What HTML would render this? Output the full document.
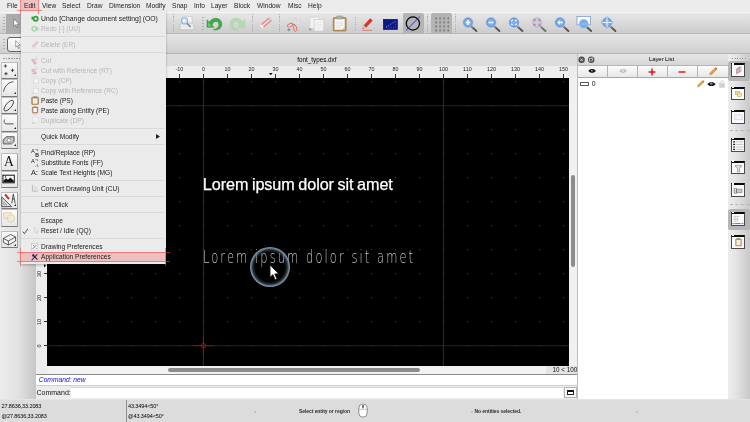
<!DOCTYPE html><html><head><meta charset="utf-8"><title>QCAD</title><style>
*{box-sizing:border-box;margin:0;padding:0}
html,body{width:750px;height:422px;overflow:hidden;background:#ececec;font-family:"Liberation Sans",sans-serif;font-size:7px;color:#1c1c1c}
div,span,svg,i,b{position:absolute;display:block}
.t{white-space:nowrap;line-height:1}
#menubar{left:0;top:0;width:750px;height:12px;background:#ebebeb}
#menubar span{top:2.2px;font-size:7.2px;color:#222;transform:scaleX(0.92);transform-origin:0 0}
#tb1{left:0;top:12px;width:750px;height:22.4px;background:linear-gradient(#e7e7e7,#cccccc);border-top:0.6px solid #f6f6f6;border-bottom:0.8px solid #b9b9b9}
#tb2{left:0;top:34.4px;width:750px;height:19.4px;background:linear-gradient(#e5e5e5,#cfcfcf);border-bottom:0.8px solid #b4b4b4}
.vsep{width:1px;top:1.2px;height:20px;background:repeating-linear-gradient(#b0b0b0 0,#b0b0b0 1.1px,transparent 1.1px,transparent 2.4px)}
.hnd{width:2.1px;top:4px;height:13.4px;background:repeating-linear-gradient(#b0b0b0 0,#b0b0b0 1px,transparent 1px,transparent 3.07px)}
.sel{background:#b4b4b4;border-radius:2px}
#mid{left:0;top:54px;width:750px;height:345px;background:#ececec}
#ltool{left:0;top:54px;width:36px;height:345px;background:linear-gradient(90deg,#ececec,#e2e2e2 50%,#c6c6c6)}
.lb{left:0.6px;width:17.2px;height:17.4px;border:0.9px solid #a0a0a0;border-left-color:#c4c4c4;border-top-color:#bdbdbd;border-bottom-color:#7a7a7a;background:linear-gradient(#fbfbfb,#e6e6e6);border-radius:1px}
#tabbar{left:36px;top:54px;width:541px;height:11.5px;background:#dddddd}
#hruler{left:36px;top:65.5px;width:541px;height:12px;background:#ededed}
#vruler{left:36px;top:77px;width:11px;height:297px;background:#ededed}
.rl{font-size:5.4px;color:#222;top:1.9px;width:20px;text-align:center;line-height:1;white-space:nowrap}
.rt{width:1px;height:4.2px;top:8.2px;background:#333}
.vl{font-size:5.4px;color:#222;width:20px;height:6px;text-align:center;line-height:1;transform:rotate(-90deg);transform-origin:center;white-space:nowrap}
.vt{height:1px;width:3.5px;left:7.5px;background:#333}
#canvas{left:47px;top:77.5px;width:522px;height:288.2px;background:#000;overflow:hidden}
#vscroll{left:569px;top:77px;width:8px;height:289px;background:#f1f1f1}
#hscroll{left:47px;top:366px;width:530px;height:8px;background:#f1f1f1}
#hist{left:36px;top:374px;width:541px;height:11.5px;background:#fff;border-top:1px solid #8a8a8a;border-bottom:1px solid #cfcfcf}
#cmd{left:36px;top:387px;width:541px;height:12px}
#status{left:0;top:399px;width:750px;height:23px;background:#dcdcdc;border-top:1px solid #e4e4e4}
#status .s{font-size:5.5px;color:#000;white-space:nowrap;line-height:1;letter-spacing:-0.1px}
#layers{left:577px;top:54px;width:151px;height:345px;background:#fff;border-left:1px solid #bdbdbd}
#rtool{left:727.6px;top:54px;width:22.4px;height:345px;background:linear-gradient(90deg,#ededed,#e6e6e6 30%,#c9c9c9)}
.wi{left:3.3px;width:14px;height:13.8px;background:#fcfcfc;border:0.7px solid #4a4a4a;border-top:2.6px solid #0a0a0a}
.wi:before{content:'';position:absolute;left:0.3px;top:-2.2px;width:1.6px;height:1.6px;background:#fff}
#menu{left:21px;top:11px;width:144.8px;height:252.8px;background:#ebebeb;box-shadow:0 0.5px 2.5px rgba(0,0,0,.28)}
#menu .mi{left:19.6px;font-size:7.1px;color:#1a1a1a;white-space:nowrap;line-height:1;transform:scaleX(0.93);transform-origin:0 0}
#menu .dis{color:#b6b6b6}
#menu .sep{left:0;width:144px;height:1.4px;background:#dadada}
.hl{background:rgba(250,100,100,0.33)}
.rl1{background:rgba(240,64,64,0.55)}
</style></head><body><div id="root" style="left:0;top:0;width:750px;height:422px;will-change:transform">
<div id="menubar">
<div class="hl" style="left:20.6px;top:0;width:17.6px;height:10.3px"></div>
<span class="t" style="left:7px">File</span>
<span class="t" style="left:24px">Edit</span>
<span class="t" style="left:42px">View</span>
<span class="t" style="left:62px">Select</span>
<span class="t" style="left:87px">Draw</span>
<span class="t" style="left:108.5px">Dimension</span>
<span class="t" style="left:146px">Modify</span>
<span class="t" style="left:172px">Snap</span>
<span class="t" style="left:194px">Info</span>
<span class="t" style="left:211px">Layer</span>
<span class="t" style="left:234px">Block</span>
<span class="t" style="left:257px">Window</span>
<span class="t" style="left:287.5px">Misc</span>
<span class="t" style="left:307.5px">Help</span>
</div>
<div id="tb1">
<div class="hnd" style="left:3px"></div>
<div class="sel" style="left:6px;top:0.5px;width:20px;height:21px;border-radius:0;background:#ababab"></div>
<svg style="left:12.8px;top:5.2px" width="7.3" height="11" viewBox="0 0 10 15"><path d="M1 1 L1 11.5 L3.6 9.2 L5.6 13.6 L7.2 12.9 L5.3 8.6 L8.8 8.4 Z" fill="#fff" stroke="#6a6a6a" stroke-width="1"/></svg>
<div class="vsep" style="left:172.5px"></div>
<svg style="left:179px;top:3px" width="17" height="15" viewBox="0 0 17 15"><rect x="3.2" y="0.6" width="9.8" height="7" fill="#f3f3f3" stroke="#c4c4c4" stroke-width="0.5"/><path d="M2.2 6.8 H13.6 L15 9 V13 Q15 13.8 14.2 13.8 H1.6 Q0.8 13.8 0.8 13 V9 Z" fill="#dedede" stroke="#b4b4b4" stroke-width="0.5"/><rect x="1.6" y="10.6" width="12.6" height="2.2" fill="#efefef"/><path d="M1.4 9.2 H14.4" stroke="#f6f6f6" stroke-width="0.8"/><path d="M8 7.4 L11.2 10.6" stroke="#8a8a8a" stroke-width="1.5" stroke-linecap="round"/><circle cx="5.5" cy="4.8" r="3.1" fill="#cfe1f7" stroke="#8fb4e6" stroke-width="1.1"/><circle cx="5.3" cy="4.2" r="1.3" fill="#f2f7fd"/></svg>
<div class="hnd" style="left:201.5px"></div>
<svg style="left:206px;top:3.5px" width="17" height="15" viewBox="0 0 17 15"><path d="M1 2.9 L1 10.3 L8 10.3 L6 7.9 C7 5.4 9 4.2 10.6 4.6 C12.4 5 13.2 6.6 12.8 8.4 C12.3 10.6 10.2 12.2 7.3 12.6 C10.6 13.8 14.8 12.2 15.7 8.4 C16.5 4.8 14 1.6 10.4 1.3 C7.6 1.1 5 2.6 3.4 5 Z" fill="#41aa48" stroke="#2b9236" stroke-width="0.5" stroke-linejoin="round"/><path d="M2 5 L2 9.4 L6 9.4 Z" fill="#7fd07f" opacity="0.7"/></svg>
<svg style="left:229.3px;top:3.5px" width="17" height="15" viewBox="0 0 17 15"><path transform="translate(16.7,0) scale(-1,1)" d="M1 2.9 L1 10.3 L8 10.3 L6 7.9 C7 5.4 9 4.2 10.6 4.6 C12.4 5 13.2 6.6 12.8 8.4 C12.3 10.6 10.2 12.2 7.3 12.6 C10.6 13.8 14.8 12.2 15.7 8.4 C16.5 4.8 14 1.6 10.4 1.3 C7.6 1.1 5 2.6 3.4 5 Z" fill="#b1dcb3" stroke="#9fd2a3" stroke-width="0.5" stroke-linejoin="round"/></svg>
<div class="vsep" style="left:251.5px"></div>
<svg style="left:257px;top:3px" width="18" height="17" viewBox="0 0 18 17"><path d="M4 13.4 H15" stroke="#dadada" stroke-width="0.7"/><g transform="rotate(-40 8.6 7.2)"><rect x="2.2" y="4.9" width="12.8" height="4.6" rx="0.8" fill="#e98c8c"/><rect x="2.2" y="6.5" width="12.8" height="1.4" fill="#f7eaea"/><rect x="2.2" y="4.9" width="2.4" height="4.6" rx="0.6" fill="#f4f0f0"/><rect x="14" y="4.9" width="1" height="4.6" fill="#bdbdbd"/></g></svg>
<div class="vsep" style="left:279px"></div>
<svg style="left:285.5px;top:3.5px" width="16" height="16" viewBox="0 0 16 16"><path d="M9.3 0.4 C8.6 3 8.2 5 8.4 7.6 L10 7.4 C10.4 5 10.2 2.6 9.3 0.4Z M14.6 3.2 C12.4 3.8 10.4 5 8.4 7.2 L9.6 8.2 C11.6 7 13.4 5.4 14.6 3.2Z" fill="#f2f2f2" stroke="#c2c2c2" stroke-width="0.5"/><ellipse cx="4" cy="8.2" rx="2.9" ry="1.5" fill="none" stroke="#e56e6e" stroke-width="0.9" transform="rotate(-25 4 8.2)"/><ellipse cx="9.2" cy="11.4" rx="1.6" ry="3.1" fill="none" stroke="#e56e6e" stroke-width="0.9" transform="rotate(-14 9.2 11.4)"/><path d="M6.4 7.6 L8.8 7.6 M8.8 7.6 L9 9" stroke="#e56e6e" stroke-width="1"/><path d="M1.4 12.8 H4.4 M2.9 11.3 V14.3" stroke="#6a6a6a" stroke-width="0.7"/></svg>
<svg style="left:308px;top:2.8px" width="18" height="17" viewBox="0 0 18 17"><rect x="1.8" y="1" width="9.6" height="11.4" fill="#f0f0f0" stroke="#d2d2d2" stroke-width="0.7"/><rect x="6.2" y="3.4" width="9.6" height="11.6" fill="#f5f5f5" stroke="#cdcdcd" stroke-width="0.7"/><path d="M7.8 6.4 H14.2 M7.8 8.4 H14.2 M7.8 10.4 H14.2 M7.8 12.4 H12.4" stroke="#e0e0e0" stroke-width="0.6"/><path d="M0.6 13.4 H3.6 M2.1 11.9 V14.9" stroke="#8e8e8e" stroke-width="0.7"/></svg>
<svg style="left:331.8px;top:2px" width="16" height="17" viewBox="0 0 16 17"><rect x="1.2" y="2.6" width="13" height="13.4" rx="1" fill="#c2934f" stroke="#96703a" stroke-width="0.6"/><rect x="2.6" y="4" width="10.2" height="10.8" fill="#f8f8f8" stroke="#d0c4b0" stroke-width="0.3"/><rect x="4.6" y="1" width="6.2" height="3" rx="0.9" fill="#aeb2ae" stroke="#838783" stroke-width="0.5"/><path d="M4.2 7 H11.2 M4.2 8.8 H11.2 M4.2 10.6 H11.2 M4.2 12.4 H9" stroke="#d4d4d4" stroke-width="0.6"/><path d="M9.8 14.8 L12.8 14.8 L12.8 11.8 Z" fill="#b4b8bc"/></svg>
<div class="vsep" style="left:354.5px;top:4px;height:14px"></div>
<svg style="left:360.5px;top:3.5px" width="13" height="16" viewBox="0 0 13 16"><path d="M9.2 1.6 L11.4 3.6 L5 10.6 L2.8 8.6 Z" fill="#e23328" stroke="#b3231b" stroke-width="0.4"/><path d="M2.8 8.6 L5 10.6 L1.6 11.8 Z" fill="#ecd0a8" stroke="#a8875e" stroke-width="0.3"/><path d="M1.6 11.8 L2.6 11.5 L2 10.8Z" fill="#222"/><path d="M1.4 13.3 H11" stroke="#e2443b" stroke-width="0.6"/></svg>
<svg style="left:382.6px;top:5.6px" width="16" height="11" viewBox="0 0 16 11"><rect x="0.3" y="0.3" width="14.2" height="10.2" fill="#0b1784" stroke="#070f5c" stroke-width="0.6"/><path d="M3 8.2 L12.4 2.2" stroke="#dfe4ff" stroke-width="0.7" stroke-dasharray="1.1 1.5"/><path d="M3 8.6 H12.6 M12.6 8.6 V2.6" stroke="#9aa6ff" stroke-width="0.5" stroke-dasharray="0.8 1.6"/></svg>
<div class="sel" style="left:402.8px;top:0.4px;width:21px;height:20.8px"></div>
<svg style="left:404px;top:2px" width="18" height="18" viewBox="0 0 18 18"><circle cx="8.9" cy="8.5" r="6.6" fill="none" stroke="#000" stroke-width="1.25"/><path d="M2 15.4 L15.9 1.6" stroke="#2233ee" stroke-width="1"/></svg>
<div class="vsep" style="left:427px"></div>
<div class="sel" style="left:431.3px;top:0.4px;width:20.8px;height:20.8px"></div>
<svg style="left:433.5px;top:3px" width="17" height="17" viewBox="0 0 17 17"><rect x="1.5" y="1.4" width="1" height="2" fill="#595959"/><rect x="1.5" y="5.4" width="1" height="2" fill="#595959"/><rect x="1.5" y="9.4" width="1" height="2" fill="#595959"/><rect x="1.5" y="13.4" width="1" height="2" fill="#595959"/><rect x="5.55" y="1.4" width="1" height="2" fill="#595959"/><rect x="5.55" y="5.4" width="1" height="2" fill="#595959"/><rect x="5.55" y="9.4" width="1" height="2" fill="#595959"/><rect x="5.55" y="13.4" width="1" height="2" fill="#595959"/><rect x="9.6" y="1.4" width="1" height="2" fill="#595959"/><rect x="9.6" y="5.4" width="1" height="2" fill="#595959"/><rect x="9.6" y="9.4" width="1" height="2" fill="#595959"/><rect x="9.6" y="13.4" width="1" height="2" fill="#595959"/><rect x="13.65" y="1.4" width="1" height="2" fill="#595959"/><rect x="13.65" y="5.4" width="1" height="2" fill="#595959"/><rect x="13.65" y="9.4" width="1" height="2" fill="#595959"/><rect x="13.65" y="13.4" width="1" height="2" fill="#595959"/></svg>
<div class="vsep" style="left:455.2px"></div>
<svg style="left:461px;top:2.5px" width="18" height="17" viewBox="0 0 18 17"><path d="M10.4 10.4 L15.4 15" stroke="#555" stroke-width="1.9" stroke-linecap="round"/><path d="M10.6 10.2 L12 11.6" stroke="#999" stroke-width="1.2"/><circle cx="7" cy="6.5" r="5" fill="#7fb0ee" stroke="#b8c4d6" stroke-width="1"/><circle cx="7" cy="6.5" r="4.2" fill="none" stroke="#3f78cf" stroke-width="0.6"/><path d="M4.6 6.5 H9.4 M7 4.1 V8.9" stroke="#fff" stroke-width="1.5"/></svg>
<svg style="left:483.7px;top:2.5px" width="18" height="17" viewBox="0 0 18 17"><path d="M10.4 10.4 L15.4 15" stroke="#555" stroke-width="1.9" stroke-linecap="round"/><path d="M10.6 10.2 L12 11.6" stroke="#999" stroke-width="1.2"/><circle cx="7" cy="6.5" r="5" fill="#7fb0ee" stroke="#b8c4d6" stroke-width="1"/><circle cx="7" cy="6.5" r="4.2" fill="none" stroke="#3f78cf" stroke-width="0.6"/><path d="M4.6 6.5 H9.4" stroke="#fff" stroke-width="1.5"/></svg>
<svg style="left:507px;top:2.5px" width="18" height="17" viewBox="0 0 18 17"><path d="M10.4 10.4 L15.4 15" stroke="#555" stroke-width="1.9" stroke-linecap="round"/><path d="M10.6 10.2 L12 11.6" stroke="#999" stroke-width="1.2"/><circle cx="7" cy="6.5" r="5" fill="#7fb0ee" stroke="#b8c4d6" stroke-width="1"/><circle cx="7" cy="6.5" r="4.2" fill="none" stroke="#3f78cf" stroke-width="0.6"/><path d="M4.6 5.4 V4.2 H5.9 M8.1 4.2 H9.4 V5.4 M9.4 7.6 V8.8 H8.1 M5.9 8.8 H4.6 V7.6" stroke="#fff" stroke-width="1" fill="none"/></svg>
<svg style="left:529.5px;top:2.5px" width="18" height="17" viewBox="0 0 18 17" opacity="0.8"><path d="M10.4 10.4 L15.4 15" stroke="#555" stroke-width="1.9" stroke-linecap="round"/><path d="M10.6 10.2 L12 11.6" stroke="#999" stroke-width="1.2"/><circle cx="7" cy="6.5" r="5" fill="#bdd0ea" stroke="#b8c4d6" stroke-width="1"/><circle cx="7" cy="6.5" r="4.2" fill="none" stroke="#a3b8d8" stroke-width="0.6"/><path d="M4.2 5.4 V3.9 H5.8 M8.2 3.9 H9.8 V5.4 M9.8 7.6 V9.1 H8.2 M5.8 9.1 H4.2 V7.6" fill="none" stroke="#ea4c4c" stroke-width="1.2"/></svg>
<svg style="left:553px;top:2.5px" width="18" height="17" viewBox="0 0 18 17"><path d="M10.4 10.4 L15.4 15" stroke="#555" stroke-width="1.9" stroke-linecap="round"/><path d="M10.6 10.2 L12 11.6" stroke="#999" stroke-width="1.2"/><circle cx="7" cy="6.5" r="5" fill="#7fb0ee" stroke="#b8c4d6" stroke-width="1"/><circle cx="7" cy="6.5" r="4.2" fill="none" stroke="#3f78cf" stroke-width="0.6"/><path d="M4.2 6.5 L6.8 4.2 V5.7 H9.8 V7.3 H6.8 V8.8 Z" fill="#fff"/></svg>
<svg style="left:576px;top:2.5px" width="20" height="17" viewBox="0 0 20 17"><rect x="1" y="0.5" width="13.6" height="8.3" fill="#fdfdfd" stroke="#6a8fd8" stroke-width="0.7"/><path d="M11 11.2 L15.2 15" stroke="#555" stroke-width="1.9" stroke-linecap="round"/><circle cx="7.7" cy="7.8" r="4.5" fill="#78aaec" stroke="#b4c6e0" stroke-width="0.8"/><path d="M5 8 H10.4" stroke="#a8c8f4" stroke-width="0.9"/></svg>
<svg style="left:599.7px;top:2.5px" width="18" height="17" viewBox="0 0 18 17"><path d="M10.4 10.4 L15.4 15" stroke="#555" stroke-width="1.9" stroke-linecap="round"/><path d="M10.6 10.2 L12 11.6" stroke="#999" stroke-width="1.2"/><circle cx="7" cy="6.5" r="5" fill="#7fb0ee" stroke="#b8c4d6" stroke-width="1"/><circle cx="7" cy="6.5" r="4.2" fill="none" stroke="#3f78cf" stroke-width="0.6"/><path d="M7 1.2 V11.8 M1.7 6.5 H12.3" stroke="#eef4fd" stroke-width="1"/><path d="M7 0.2 L6 1.6 H8Z M7 12.8 L6 11.4 H8Z M0.7 6.5 L2.1 5.5 V7.5Z M13.3 6.5 L11.9 5.5 V7.5Z" fill="#6e9ce2"/></svg>
</div>
<div id="tb2">
<div class="hnd" style="left:3px;top:4.6px;height:10.4px"></div>
<div style="left:7px;top:2.4px;width:22px;height:15.4px;border:1px solid #666;border-radius:3px;background:linear-gradient(#fdfdfd,#e8e8e8)"></div>
<svg style="left:14.6px;top:5.4px" width="6.6" height="9.6" viewBox="0 0 9 13"><path d="M1 0.8 L1 9.6 L3.1 7.8 L4.7 11.6 L6 11 L4.4 7.3 L7.2 7.1 Z" fill="#fff" stroke="#555" stroke-width="0.7"/></svg>
</div>
<div id="mid"></div>
<div id="ltool">
<div style="left:2.9px;top:4.2px;width:17.6px;height:1px;background:repeating-linear-gradient(90deg,#9a9a9a 0,#9a9a9a 1.7px,transparent 1.7px,transparent 2.67px)"></div>
<div class="lb" style="top:7.7px"></div>
<div class="lb" style="top:25.2px"></div>
<div class="lb" style="top:42.7px"></div>
<div class="lb" style="top:60.2px"></div>
<div class="lb" style="top:77.7px"></div>
<div class="lb" style="top:99.4px"></div>
<div class="lb" style="top:116.7px"></div>
<div class="lb" style="top:137.5px"></div>
<div class="lb" style="top:155.2px"></div>
<div class="lb" style="top:177px"></div>
<svg style="left:14px;top:20.3px" width="2" height="2" viewBox="0 0 2 2"><path d="M2 0 V2 H0Z" fill="#222"/></svg>
<svg style="left:14px;top:37.8px" width="2" height="2" viewBox="0 0 2 2"><path d="M2 0 V2 H0Z" fill="#222"/></svg>
<svg style="left:14px;top:55.300000000000004px" width="2" height="2" viewBox="0 0 2 2"><path d="M2 0 V2 H0Z" fill="#222"/></svg>
<svg style="left:14px;top:72.8px" width="2" height="2" viewBox="0 0 2 2"><path d="M2 0 V2 H0Z" fill="#222"/></svg>
<svg style="left:14px;top:90.3px" width="2" height="2" viewBox="0 0 2 2"><path d="M2 0 V2 H0Z" fill="#222"/></svg>
<svg style="left:14px;top:150.1px" width="2" height="2" viewBox="0 0 2 2"><path d="M2 0 V2 H0Z" fill="#222"/></svg>
<svg style="left:14px;top:189.6px" width="2" height="2" viewBox="0 0 2 2"><path d="M2 0 V2 H0Z" fill="#222"/></svg>
<svg style="left:1px;top:8.7px" width="16" height="16" viewBox="0 0 16 16"><path d="M4.4 1.3 V4.7 M2.7 3 H6.1 M11.5 5.6 V9 M9.8 7.3 H13.2 M5 9 V12.4 M3.3 10.7 H6.7" stroke="#000" stroke-width="0.65"/></svg>
<svg style="left:1px;top:26.2px" width="16" height="16" viewBox="0 0 16 16"><path d="M2.6 11.6 C3.4 6.4 6.6 2.6 12.5 1.7" stroke="#333" stroke-width="0.85" fill="none"/></svg>
<svg style="left:1px;top:43.7px" width="16" height="16" viewBox="0 0 16 16"><ellipse cx="7.8" cy="7.6" rx="6.6" ry="2.7" transform="rotate(-50 7.8 7.6)" stroke="#333" stroke-width="0.85" fill="none"/></svg>
<svg style="left:1px;top:61.2px" width="16" height="16" viewBox="0 0 16 16"><path d="M3.6 4.6 C2.4 7.4 3.4 9 6 8.9 L12.6 8.9" stroke="#333" stroke-width="0.85" fill="none"/></svg>
<svg style="left:1px;top:78.7px" width="16" height="16" viewBox="0 0 16 16"><path d="M2.2 6.6 L5.4 3.6 H13.2 V8.4 L10.4 11 H2.2 Z" fill="#cfcfcf" stroke="#444" stroke-width="0.7"/><path d="M3 7 L5.8 4.4 H12.4 V8 L10 10.2 H3Z" fill="none" stroke="#555" stroke-width="0.6" stroke-dasharray="0.8 0.6"/><circle cx="8" cy="7.3" r="1.9" fill="#f4f4f4" stroke="#666" stroke-width="0.6"/></svg>
<span class="t" style="left:4.1px;top:100.6px;font-family:'Liberation Serif',serif;font-size:13.6px;color:#111">A</span>
<svg style="left:1px;top:117.7px" width="16" height="16" viewBox="0 0 16 16"><rect x="1.9" y="3.2" width="11.4" height="7.6" fill="#fff" stroke="#111" stroke-width="1"/><path d="M2.4 10.3 V8.6 L5.2 6.2 L7 7.8 L9.4 5.4 L12.8 8.8 V10.3 Z" fill="#111"/><circle cx="4.6" cy="5" r="0.7" fill="#111"/></svg>
<svg style="left:1px;top:138.5px" width="16" height="16" viewBox="0 0 16 16"><path d="M0.8 13.6 V4 L10.6 13.6 Z" fill="#e4e4e4" stroke="#333" stroke-width="0.8"/><path d="M2.8 11.8 V8.8 L5.8 11.8Z" fill="#fafafa" stroke="#555" stroke-width="0.5"/><path d="M4 1.4 L8 6" stroke="#dd2a22" stroke-width="2"/><path d="M12.3 1 L10.8 10.4 M12.3 1 L14.2 10.4 M11 6 H13.4" stroke="#333" stroke-width="0.8" fill="none"/></svg>
<svg style="left:1px;top:156.2px" width="16" height="16" viewBox="0 0 16 16"><rect x="2.8" y="2.8" width="7.6" height="5.8" fill="#f1ead6" stroke="#e6bdb6" stroke-width="0.7"/><circle cx="9.9" cy="8.4" r="3.6" fill="#f3ecd0" fill-opacity="0.85" stroke="#d8c890" stroke-width="0.7"/></svg>
<svg style="left:1px;top:178px" width="16" height="16" viewBox="0 0 16 16"><path d="M2.4 6.4 L9.6 2.4 L14.6 5 V9 L7.4 13 L2.4 10.4 Z M2.4 6.4 L7.4 9 L14.6 5 M7.4 9 V13" fill="#f6f6f6" stroke="#333" stroke-width="0.8" stroke-linejoin="round"/></svg>
</div>
<div id="tabbar"><span class="t" style="left:261.3px;top:3px;font-size:6.3px;color:#000">font_types.dxf</span></div>
<div id="hruler">
<span class="rl" style="left:133.4px">-10</span><i class="rt" style="left:142.9px"></i>
<span class="rl" style="left:157.4px">0</span><i class="rt" style="left:166.9px"></i>
<span class="rl" style="left:181.4px">10</span><i class="rt" style="left:190.9px"></i>
<span class="rl" style="left:205.4px">20</span><i class="rt" style="left:214.9px"></i>
<span class="rl" style="left:229.4px">30</span><i class="rt" style="left:238.9px"></i>
<span class="rl" style="left:253.4px">40</span><i class="rt" style="left:262.9px"></i>
<span class="rl" style="left:277.4px">50</span><i class="rt" style="left:286.9px"></i>
<span class="rl" style="left:301.4px">60</span><i class="rt" style="left:310.9px"></i>
<span class="rl" style="left:325.4px">70</span><i class="rt" style="left:334.9px"></i>
<span class="rl" style="left:349.4px">80</span><i class="rt" style="left:358.9px"></i>
<span class="rl" style="left:373.4px">90</span><i class="rt" style="left:382.9px"></i>
<span class="rl" style="left:397.4px">100</span><i class="rt" style="left:406.9px"></i>
<span class="rl" style="left:421.4px">110</span><i class="rt" style="left:430.9px"></i>
<span class="rl" style="left:445.4px">120</span><i class="rt" style="left:454.9px"></i>
<span class="rl" style="left:469.4px">130</span><i class="rt" style="left:478.9px"></i>
<span class="rl" style="left:493.4px">140</span><i class="rt" style="left:502.9px"></i>
<span class="rl" style="left:517.4px">150</span><i class="rt" style="left:526.9px"></i>
<svg style="left:233px;top:7.6px" width="3.6" height="2.4" viewBox="0 0 5 3"><path d="M0 0 H5 L2.5 3Z" fill="#111"/></svg>
</div>
<div id="vruler">
<span class="vl" style="left:-6.5px;top:265.7px">0</span><i class="vt" style="top:268.2px"></i>
<span class="vl" style="left:-6.5px;top:241.7px">10</span><i class="vt" style="top:244.2px"></i>
<span class="vl" style="left:-6.5px;top:217.7px">20</span><i class="vt" style="top:220.2px"></i>
<span class="vl" style="left:-6.5px;top:193.7px">30</span><i class="vt" style="top:196.2px"></i>
<span class="vl" style="left:-6.5px;top:169.7px">40</span><i class="vt" style="top:172.2px"></i>
<span class="vl" style="left:-6.5px;top:145.7px">50</span><i class="vt" style="top:148.2px"></i>
<span class="vl" style="left:-6.5px;top:121.7px">60</span><i class="vt" style="top:124.2px"></i>
<span class="vl" style="left:-6.5px;top:97.7px">70</span><i class="vt" style="top:100.2px"></i>
<span class="vl" style="left:-6.5px;top:73.7px">80</span><i class="vt" style="top:76.2px"></i>
<span class="vl" style="left:-6.5px;top:49.7px">90</span><i class="vt" style="top:52.2px"></i>
<span class="vl" style="left:-6.5px;top:25.7px">100</span><i class="vt" style="top:28.2px"></i>
<span class="vl" style="left:-6.5px;top:1.7px">110</span><i class="vt" style="top:4.2px"></i>
<svg style="left:7.6px;top:187.4px" width="2.2" height="3.4" viewBox="0 0 3 5"><path d="M0 0 V5 L3 2.5Z" fill="#111"/></svg>
</div>
<div id="canvas">
<svg style="left:0;top:-0.5px" width="523" height="289" viewBox="47 77 523 289"><g fill="#505050"><rect x="58.9" y="345.2" width="1" height="1"/><rect x="58.9" y="321.2" width="1" height="1"/><rect x="58.9" y="297.2" width="1" height="1"/><rect x="58.9" y="273.2" width="1" height="1"/><rect x="58.9" y="249.2" width="1" height="1"/><rect x="58.9" y="225.2" width="1" height="1"/><rect x="58.9" y="201.2" width="1" height="1"/><rect x="58.9" y="177.2" width="1" height="1"/><rect x="58.9" y="153.2" width="1" height="1"/><rect x="58.9" y="129.2" width="1" height="1"/><rect x="58.9" y="105.2" width="1" height="1"/><rect x="58.9" y="81.2" width="1" height="1"/><rect x="82.9" y="345.2" width="1" height="1"/><rect x="82.9" y="321.2" width="1" height="1"/><rect x="82.9" y="297.2" width="1" height="1"/><rect x="82.9" y="273.2" width="1" height="1"/><rect x="82.9" y="249.2" width="1" height="1"/><rect x="82.9" y="225.2" width="1" height="1"/><rect x="82.9" y="201.2" width="1" height="1"/><rect x="82.9" y="177.2" width="1" height="1"/><rect x="82.9" y="153.2" width="1" height="1"/><rect x="82.9" y="129.2" width="1" height="1"/><rect x="82.9" y="105.2" width="1" height="1"/><rect x="82.9" y="81.2" width="1" height="1"/><rect x="106.9" y="345.2" width="1" height="1"/><rect x="106.9" y="321.2" width="1" height="1"/><rect x="106.9" y="297.2" width="1" height="1"/><rect x="106.9" y="273.2" width="1" height="1"/><rect x="106.9" y="249.2" width="1" height="1"/><rect x="106.9" y="225.2" width="1" height="1"/><rect x="106.9" y="201.2" width="1" height="1"/><rect x="106.9" y="177.2" width="1" height="1"/><rect x="106.9" y="153.2" width="1" height="1"/><rect x="106.9" y="129.2" width="1" height="1"/><rect x="106.9" y="105.2" width="1" height="1"/><rect x="106.9" y="81.2" width="1" height="1"/><rect x="130.9" y="345.2" width="1" height="1"/><rect x="130.9" y="321.2" width="1" height="1"/><rect x="130.9" y="297.2" width="1" height="1"/><rect x="130.9" y="273.2" width="1" height="1"/><rect x="130.9" y="249.2" width="1" height="1"/><rect x="130.9" y="225.2" width="1" height="1"/><rect x="130.9" y="201.2" width="1" height="1"/><rect x="130.9" y="177.2" width="1" height="1"/><rect x="130.9" y="153.2" width="1" height="1"/><rect x="130.9" y="129.2" width="1" height="1"/><rect x="130.9" y="105.2" width="1" height="1"/><rect x="130.9" y="81.2" width="1" height="1"/><rect x="154.9" y="345.2" width="1" height="1"/><rect x="154.9" y="321.2" width="1" height="1"/><rect x="154.9" y="297.2" width="1" height="1"/><rect x="154.9" y="273.2" width="1" height="1"/><rect x="154.9" y="249.2" width="1" height="1"/><rect x="154.9" y="225.2" width="1" height="1"/><rect x="154.9" y="201.2" width="1" height="1"/><rect x="154.9" y="177.2" width="1" height="1"/><rect x="154.9" y="153.2" width="1" height="1"/><rect x="154.9" y="129.2" width="1" height="1"/><rect x="154.9" y="105.2" width="1" height="1"/><rect x="154.9" y="81.2" width="1" height="1"/><rect x="178.9" y="345.2" width="1" height="1"/><rect x="178.9" y="321.2" width="1" height="1"/><rect x="178.9" y="297.2" width="1" height="1"/><rect x="178.9" y="273.2" width="1" height="1"/><rect x="178.9" y="249.2" width="1" height="1"/><rect x="178.9" y="225.2" width="1" height="1"/><rect x="178.9" y="201.2" width="1" height="1"/><rect x="178.9" y="177.2" width="1" height="1"/><rect x="178.9" y="153.2" width="1" height="1"/><rect x="178.9" y="129.2" width="1" height="1"/><rect x="178.9" y="105.2" width="1" height="1"/><rect x="178.9" y="81.2" width="1" height="1"/><rect x="202.9" y="345.2" width="1" height="1"/><rect x="202.9" y="321.2" width="1" height="1"/><rect x="202.9" y="297.2" width="1" height="1"/><rect x="202.9" y="273.2" width="1" height="1"/><rect x="202.9" y="249.2" width="1" height="1"/><rect x="202.9" y="225.2" width="1" height="1"/><rect x="202.9" y="201.2" width="1" height="1"/><rect x="202.9" y="177.2" width="1" height="1"/><rect x="202.9" y="153.2" width="1" height="1"/><rect x="202.9" y="129.2" width="1" height="1"/><rect x="202.9" y="105.2" width="1" height="1"/><rect x="202.9" y="81.2" width="1" height="1"/><rect x="226.9" y="345.2" width="1" height="1"/><rect x="226.9" y="321.2" width="1" height="1"/><rect x="226.9" y="297.2" width="1" height="1"/><rect x="226.9" y="273.2" width="1" height="1"/><rect x="226.9" y="249.2" width="1" height="1"/><rect x="226.9" y="225.2" width="1" height="1"/><rect x="226.9" y="201.2" width="1" height="1"/><rect x="226.9" y="177.2" width="1" height="1"/><rect x="226.9" y="153.2" width="1" height="1"/><rect x="226.9" y="129.2" width="1" height="1"/><rect x="226.9" y="105.2" width="1" height="1"/><rect x="226.9" y="81.2" width="1" height="1"/><rect x="250.9" y="345.2" width="1" height="1"/><rect x="250.9" y="321.2" width="1" height="1"/><rect x="250.9" y="297.2" width="1" height="1"/><rect x="250.9" y="273.2" width="1" height="1"/><rect x="250.9" y="249.2" width="1" height="1"/><rect x="250.9" y="225.2" width="1" height="1"/><rect x="250.9" y="201.2" width="1" height="1"/><rect x="250.9" y="177.2" width="1" height="1"/><rect x="250.9" y="153.2" width="1" height="1"/><rect x="250.9" y="129.2" width="1" height="1"/><rect x="250.9" y="105.2" width="1" height="1"/><rect x="250.9" y="81.2" width="1" height="1"/><rect x="274.9" y="345.2" width="1" height="1"/><rect x="274.9" y="321.2" width="1" height="1"/><rect x="274.9" y="297.2" width="1" height="1"/><rect x="274.9" y="273.2" width="1" height="1"/><rect x="274.9" y="249.2" width="1" height="1"/><rect x="274.9" y="225.2" width="1" height="1"/><rect x="274.9" y="201.2" width="1" height="1"/><rect x="274.9" y="177.2" width="1" height="1"/><rect x="274.9" y="153.2" width="1" height="1"/><rect x="274.9" y="129.2" width="1" height="1"/><rect x="274.9" y="105.2" width="1" height="1"/><rect x="274.9" y="81.2" width="1" height="1"/><rect x="298.9" y="345.2" width="1" height="1"/><rect x="298.9" y="321.2" width="1" height="1"/><rect x="298.9" y="297.2" width="1" height="1"/><rect x="298.9" y="273.2" width="1" height="1"/><rect x="298.9" y="249.2" width="1" height="1"/><rect x="298.9" y="225.2" width="1" height="1"/><rect x="298.9" y="201.2" width="1" height="1"/><rect x="298.9" y="177.2" width="1" height="1"/><rect x="298.9" y="153.2" width="1" height="1"/><rect x="298.9" y="129.2" width="1" height="1"/><rect x="298.9" y="105.2" width="1" height="1"/><rect x="298.9" y="81.2" width="1" height="1"/><rect x="322.9" y="345.2" width="1" height="1"/><rect x="322.9" y="321.2" width="1" height="1"/><rect x="322.9" y="297.2" width="1" height="1"/><rect x="322.9" y="273.2" width="1" height="1"/><rect x="322.9" y="249.2" width="1" height="1"/><rect x="322.9" y="225.2" width="1" height="1"/><rect x="322.9" y="201.2" width="1" height="1"/><rect x="322.9" y="177.2" width="1" height="1"/><rect x="322.9" y="153.2" width="1" height="1"/><rect x="322.9" y="129.2" width="1" height="1"/><rect x="322.9" y="105.2" width="1" height="1"/><rect x="322.9" y="81.2" width="1" height="1"/><rect x="346.9" y="345.2" width="1" height="1"/><rect x="346.9" y="321.2" width="1" height="1"/><rect x="346.9" y="297.2" width="1" height="1"/><rect x="346.9" y="273.2" width="1" height="1"/><rect x="346.9" y="249.2" width="1" height="1"/><rect x="346.9" y="225.2" width="1" height="1"/><rect x="346.9" y="201.2" width="1" height="1"/><rect x="346.9" y="177.2" width="1" height="1"/><rect x="346.9" y="153.2" width="1" height="1"/><rect x="346.9" y="129.2" width="1" height="1"/><rect x="346.9" y="105.2" width="1" height="1"/><rect x="346.9" y="81.2" width="1" height="1"/><rect x="370.9" y="345.2" width="1" height="1"/><rect x="370.9" y="321.2" width="1" height="1"/><rect x="370.9" y="297.2" width="1" height="1"/><rect x="370.9" y="273.2" width="1" height="1"/><rect x="370.9" y="249.2" width="1" height="1"/><rect x="370.9" y="225.2" width="1" height="1"/><rect x="370.9" y="201.2" width="1" height="1"/><rect x="370.9" y="177.2" width="1" height="1"/><rect x="370.9" y="153.2" width="1" height="1"/><rect x="370.9" y="129.2" width="1" height="1"/><rect x="370.9" y="105.2" width="1" height="1"/><rect x="370.9" y="81.2" width="1" height="1"/><rect x="394.9" y="345.2" width="1" height="1"/><rect x="394.9" y="321.2" width="1" height="1"/><rect x="394.9" y="297.2" width="1" height="1"/><rect x="394.9" y="273.2" width="1" height="1"/><rect x="394.9" y="249.2" width="1" height="1"/><rect x="394.9" y="225.2" width="1" height="1"/><rect x="394.9" y="201.2" width="1" height="1"/><rect x="394.9" y="177.2" width="1" height="1"/><rect x="394.9" y="153.2" width="1" height="1"/><rect x="394.9" y="129.2" width="1" height="1"/><rect x="394.9" y="105.2" width="1" height="1"/><rect x="394.9" y="81.2" width="1" height="1"/><rect x="418.9" y="345.2" width="1" height="1"/><rect x="418.9" y="321.2" width="1" height="1"/><rect x="418.9" y="297.2" width="1" height="1"/><rect x="418.9" y="273.2" width="1" height="1"/><rect x="418.9" y="249.2" width="1" height="1"/><rect x="418.9" y="225.2" width="1" height="1"/><rect x="418.9" y="201.2" width="1" height="1"/><rect x="418.9" y="177.2" width="1" height="1"/><rect x="418.9" y="153.2" width="1" height="1"/><rect x="418.9" y="129.2" width="1" height="1"/><rect x="418.9" y="105.2" width="1" height="1"/><rect x="418.9" y="81.2" width="1" height="1"/><rect x="442.9" y="345.2" width="1" height="1"/><rect x="442.9" y="321.2" width="1" height="1"/><rect x="442.9" y="297.2" width="1" height="1"/><rect x="442.9" y="273.2" width="1" height="1"/><rect x="442.9" y="249.2" width="1" height="1"/><rect x="442.9" y="225.2" width="1" height="1"/><rect x="442.9" y="201.2" width="1" height="1"/><rect x="442.9" y="177.2" width="1" height="1"/><rect x="442.9" y="153.2" width="1" height="1"/><rect x="442.9" y="129.2" width="1" height="1"/><rect x="442.9" y="105.2" width="1" height="1"/><rect x="442.9" y="81.2" width="1" height="1"/><rect x="466.9" y="345.2" width="1" height="1"/><rect x="466.9" y="321.2" width="1" height="1"/><rect x="466.9" y="297.2" width="1" height="1"/><rect x="466.9" y="273.2" width="1" height="1"/><rect x="466.9" y="249.2" width="1" height="1"/><rect x="466.9" y="225.2" width="1" height="1"/><rect x="466.9" y="201.2" width="1" height="1"/><rect x="466.9" y="177.2" width="1" height="1"/><rect x="466.9" y="153.2" width="1" height="1"/><rect x="466.9" y="129.2" width="1" height="1"/><rect x="466.9" y="105.2" width="1" height="1"/><rect x="466.9" y="81.2" width="1" height="1"/><rect x="490.9" y="345.2" width="1" height="1"/><rect x="490.9" y="321.2" width="1" height="1"/><rect x="490.9" y="297.2" width="1" height="1"/><rect x="490.9" y="273.2" width="1" height="1"/><rect x="490.9" y="249.2" width="1" height="1"/><rect x="490.9" y="225.2" width="1" height="1"/><rect x="490.9" y="201.2" width="1" height="1"/><rect x="490.9" y="177.2" width="1" height="1"/><rect x="490.9" y="153.2" width="1" height="1"/><rect x="490.9" y="129.2" width="1" height="1"/><rect x="490.9" y="105.2" width="1" height="1"/><rect x="490.9" y="81.2" width="1" height="1"/><rect x="514.9" y="345.2" width="1" height="1"/><rect x="514.9" y="321.2" width="1" height="1"/><rect x="514.9" y="297.2" width="1" height="1"/><rect x="514.9" y="273.2" width="1" height="1"/><rect x="514.9" y="249.2" width="1" height="1"/><rect x="514.9" y="225.2" width="1" height="1"/><rect x="514.9" y="201.2" width="1" height="1"/><rect x="514.9" y="177.2" width="1" height="1"/><rect x="514.9" y="153.2" width="1" height="1"/><rect x="514.9" y="129.2" width="1" height="1"/><rect x="514.9" y="105.2" width="1" height="1"/><rect x="514.9" y="81.2" width="1" height="1"/><rect x="538.9" y="345.2" width="1" height="1"/><rect x="538.9" y="321.2" width="1" height="1"/><rect x="538.9" y="297.2" width="1" height="1"/><rect x="538.9" y="273.2" width="1" height="1"/><rect x="538.9" y="249.2" width="1" height="1"/><rect x="538.9" y="225.2" width="1" height="1"/><rect x="538.9" y="201.2" width="1" height="1"/><rect x="538.9" y="177.2" width="1" height="1"/><rect x="538.9" y="153.2" width="1" height="1"/><rect x="538.9" y="129.2" width="1" height="1"/><rect x="538.9" y="105.2" width="1" height="1"/><rect x="538.9" y="81.2" width="1" height="1"/><rect x="562.9" y="345.2" width="1" height="1"/><rect x="562.9" y="321.2" width="1" height="1"/><rect x="562.9" y="297.2" width="1" height="1"/><rect x="562.9" y="273.2" width="1" height="1"/><rect x="562.9" y="249.2" width="1" height="1"/><rect x="562.9" y="225.2" width="1" height="1"/><rect x="562.9" y="201.2" width="1" height="1"/><rect x="562.9" y="177.2" width="1" height="1"/><rect x="562.9" y="153.2" width="1" height="1"/><rect x="562.9" y="129.2" width="1" height="1"/><rect x="562.9" y="105.2" width="1" height="1"/><rect x="562.9" y="81.2" width="1" height="1"/></g><path d="M203.4 77 V366" stroke="#3a3a3a" stroke-width="0.8"/><path d="M443.4 77 V366" stroke="#3a3a3a" stroke-width="0.8"/><path d="M47 345.7 H570" stroke="#303030" stroke-width="0.8"/><path d="M47 105.7 H570" stroke="#303030" stroke-width="0.8"/><path d="M193.0 345.7 H213.8 M203.4 335.3 V356.09999999999997" stroke="#c00404" stroke-width="0.85"/><circle cx="203.4" cy="345.7" r="2.4" fill="none" stroke="#cc0808" stroke-width="0.7"/></svg>
<span class="t" style="left:155.8px;top:98.3px;font-size:16.2px;color:#fff;letter-spacing:-0.08px;word-spacing:-0.8px;-webkit-text-stroke:0.25px #fff">Lorem ipsum dolor sit amet</span>
<span class="t" style="left:155.6px;top:171.4px;font-size:16.9px;color:#c4c4c4;font-family:'DejaVu Sans Light','DejaVu Sans',sans-serif;font-weight:200;letter-spacing:3.05px;transform:scaleX(0.68);transform-origin:0 0">Lorem ipsum dolor sit amet</span>
<div style="left:203.4px;top:169px;width:40px;height:40px;border-radius:50%;background:radial-gradient(circle closest-side,rgba(20,28,36,0) 0,rgba(30,40,50,0.06) 74%,rgba(100,124,146,0.35) 86%,rgba(122,144,166,0.92) 95%,#8499ad 100%)"></div>
<svg style="left:222.2px;top:186.8px" width="11" height="17" viewBox="0 0 11 17"><path d="M1 1 L1 13.2 L3.9 10.7 L6.1 15.7 L8 14.9 L5.8 10 L9.7 9.7 Z" fill="#fff" stroke="#1a1a1a" stroke-width="0.9" stroke-linejoin="round"/></svg>
</div>
<div id="vscroll"><div style="left:1.5px;top:98px;width:4px;height:92px;border-radius:2px;background:#8c8c8c"></div></div>
<div id="hscroll"><div style="left:121px;top:2.2px;width:252px;height:4px;border-radius:2px;background:#8c8c8c"></div><div style="left:499px;top:0;width:31px;height:8px;background:#e4e4e4"></div><span class="t" style="left:505.5px;top:1px;font-size:6.3px;color:#111">10 &lt; 100</span></div>
<div style="left:36px;top:366px;width:11px;height:8px;background:#ededed"></div>
<div id="hist"><span class="t" style="left:2.8px;top:2px;font-size:6.7px;font-style:italic;color:#0808dc">Command: new</span></div>
<div id="cmd"><span class="t" style="left:0.5px;top:2.4px;font-size:7px;color:#111">Command:</span><div style="left:34.8px;top:0;width:492.6px;height:11px;background:#fff;border-top:1px solid #d6d6d6"></div><div style="left:528px;top:0.3px;width:12.6px;height:10.6px;background:#fafafa;border:0.7px solid #b4b4b4"></div><div style="left:530.8px;top:3px;width:7px;height:5px;border:0.7px solid #222;border-top:2.2px solid #111;background:#fff"></div></div>
<div id="layers">
<div style="left:0;top:0;width:150px;height:11.5px;background:linear-gradient(#e7e7e7,#d5d5d5)"></div>
<svg style="left:0.3px;top:1.8px" width="18" height="8" viewBox="0 0 18 8"><circle cx="3.6" cy="3.8" r="3.2" fill="#4a4a4a"/><path d="M2.3 2.5 L4.9 5.1 M4.9 2.5 L2.3 5.1" stroke="#e8e8e8" stroke-width="0.9"/><circle cx="13.2" cy="3.8" r="3.2" fill="#4a4a4a"/><rect x="11.6" y="2.4" width="2.6" height="2.6" fill="#4a4a4a" stroke="#e8e8e8" stroke-width="0.6"/><path d="M12.6 1.9 H14.9 V4.2" fill="none" stroke="#e8e8e8" stroke-width="0.5"/></svg>
<span class="t" style="left:52px;top:2.3px;width:63px;text-align:center;font-size:6.1px;color:#000;letter-spacing:-0.13px">Layer List</span>
<div style="left:0;top:11px;width:150px;height:13px;background:linear-gradient(#fbfbfb,#e7e7e7);border-top:0.8px solid #b4b4b4;border-bottom:0.9px solid #a8a8a8"></div>
<div style="left:29.2px;top:12px;width:1px;height:12px;background:#b4b4b4"></div>
<div style="left:59.2px;top:12px;width:1px;height:12px;background:#b4b4b4"></div>
<div style="left:89.2px;top:12px;width:1px;height:12px;background:#b4b4b4"></div>
<div style="left:119.2px;top:12px;width:1px;height:12px;background:#b4b4b4"></div>
<svg style="left:10.4px;top:14.2px" width="8.2" height="5.8" viewBox="0 0 10 7"><path d="M0.5 3.5 C2.5 0.6 7.5 0.6 9.5 3.5 C7.5 6.4 2.5 6.4 0.5 3.5Z" fill="#111"/><circle cx="5" cy="3.2" r="1.5" fill="#555"/><circle cx="4.4" cy="2.7" r="0.6" fill="#fff"/></svg>
<svg style="left:40.6px;top:14.2px" width="8.2" height="5.8" viewBox="0 0 10 7" opacity="0.5"><path d="M0.5 3.5 C2.5 0.6 7.5 0.6 9.5 3.5 C7.5 6.4 2.5 6.4 0.5 3.5Z" fill="#888"/><circle cx="5" cy="3.2" r="1.5" fill="#ccc"/><circle cx="4.4" cy="2.7" r="0.6" fill="#fff"/></svg>
<svg style="left:70.3px;top:13.5px" width="8" height="8" viewBox="0 0 8 8"><path d="M4 0.6 V7.4 M0.6 4 H7.4" stroke="#e01616" stroke-width="1.5"/></svg>
<svg style="left:100.3px;top:13.5px" width="8" height="8" viewBox="0 0 8 8"><path d="M0.6 4 H7.4" stroke="#e01616" stroke-width="1.5"/></svg>
<svg style="left:129.5px;top:13.1px" width="10" height="9" viewBox="0 0 10 9"><path d="M7.6 0.6 L9.2 2 L3 8 L1.4 6.6 Z" fill="#e8a23a" stroke="#a8621a" stroke-width="0.4"/><path d="M1.4 6.6 L3 8 L0.6 8.8Z" fill="#e8cfa8"/><path d="M7.6 0.6 L9.2 2 L8.6 2.6 L7 1.2Z" fill="#d04a3a"/></svg>
<div style="left:2.2px;top:27.7px;width:8.8px;height:4.2px;border:0.7px solid #5a5a5a;border-radius:0.6px;background:#fff"></div>
<span class="t" style="left:13.8px;top:27.4px;font-size:6.8px;color:#111">0</span>
<svg style="left:118.2px;top:25.5px" width="9" height="8" viewBox="0 0 10 9"><path d="M7.6 0.6 L9.2 2 L3 8 L1.4 6.6 Z" fill="#e8a23a" stroke="#a8621a" stroke-width="0.4"/><path d="M1.4 6.6 L3 8 L0.6 8.8Z" fill="#e8cfa8"/><path d="M7.6 0.6 L9.2 2 L8.6 2.6 L7 1.2Z" fill="#d04a3a"/></svg>
<svg style="left:129.2px;top:26.5px" width="9" height="6.3" viewBox="0 0 10 7"><path d="M0.5 3.5 C2.5 0.6 7.5 0.6 9.5 3.5 C7.5 6.4 2.5 6.4 0.5 3.5Z" fill="#111"/><circle cx="5" cy="3.2" r="1.5" fill="#555"/><circle cx="4.4" cy="2.7" r="0.6" fill="#fff"/></svg>
<svg style="left:141.4px;top:25.6px" width="6" height="8" viewBox="0 0 6 8"><path d="M1.4 3.6 V2.4 C1.4 0.4 4.6 0.4 4.6 2.4 V3.6" fill="none" stroke="#c4c4c4" stroke-width="0.8"/><rect x="0.6" y="3.6" width="4.8" height="3.8" fill="#cfcfcf" stroke="#bdbdbd" stroke-width="0.4"/></svg>
</div>
<div id="rtool">
<div style="left:4px;top:3.8px;width:14px;height:1px;background:repeating-linear-gradient(90deg,#8c8c8c 0,#8c8c8c 1px,transparent 1px,transparent 2.6px)"></div>
<div class="sel" style="left:0.4px;top:6.5px;width:22px;height:20px;border-radius:2.5px;background:#b6b6b6"></div>
<div class="sel" style="left:0.4px;top:154.5px;width:22px;height:21.5px;border-radius:2.5px;background:#b6b6b6"></div>
<div style="left:2px;top:76.3px;width:19px;height:0;border-top:1px dashed #b4b4b4"></div>
<div style="left:2px;top:150px;width:19px;height:0;border-top:1px dashed #b4b4b4"></div>
<div class="wi" style="top:9.4px"><svg style="left:0;top:0" width="13" height="11" viewBox="0 0 13 11"><path d="M4.4 4 L8 2.2 V7 L4.4 8.8Z" fill="#f2a6ae" stroke="#666" stroke-width="0.45"/><path d="M5.6 3 L9.2 1.6 V6.4 L8 7" fill="none" stroke="#777" stroke-width="0.4"/></svg></div>
<div class="wi" style="top:32.7px"><svg style="left:0;top:0" width="13" height="11" viewBox="0 0 13 11"><rect x="3.6" y="2.4" width="3.8" height="3.4" fill="#f5e3a6" stroke="#b8964a" stroke-width="0.5"/><rect x="5.4" y="4" width="3.8" height="3.4" fill="#f5e3a6" stroke="#b8964a" stroke-width="0.5"/></svg></div>
<div class="wi" style="top:55.9px"><svg style="left:0;top:0" width="13" height="11" viewBox="0 0 13 11"><rect x="2.6" y="2.8" width="7.6" height="5" fill="#f4f6fb" stroke="#c3cde2" stroke-width="0.6"/></svg></div>
<div class="wi" style="top:83.9px"><svg style="left:0;top:0" width="13" height="11" viewBox="0 0 13 11"><path d="M1.2 1.8 H3 M1.2 4.4 H3 M1.2 7 H3 M1.2 9.4 H3" stroke="#111" stroke-width="1.2"/><path d="M3.6 1.8 H11.4 M3.6 4.4 H11.4 M3.6 7 H11.4 M3.6 9.4 H11.4" stroke="#8a8a8a" stroke-width="0.5"/></svg></div>
<div class="wi" style="top:106.6px"><svg style="left:0;top:0" width="13" height="11" viewBox="0 0 13 11"><path d="M3.4 2.4 H9.6 V3.8 Q7.6 4 7.6 5.4 V9 H5.4 V5.4 Q5.4 4 3.4 3.8Z" fill="#e2e2e2" stroke="#6a6a6a" stroke-width="0.5"/></svg></div>
<div class="wi" style="top:129.4px"><svg style="left:0;top:0" width="13" height="11" viewBox="0 0 13 11"><path d="M2.6 3.4 H4.6 V8.4 H2.6Z M4.6 4.2 H10 V7.6 H4.6Z" fill="#e0e0e0" stroke="#555" stroke-width="0.5"/><path d="M6 4.2 V7.6 M7.4 4.2 V7.6 M8.8 4.2 V7.6" stroke="#999" stroke-width="0.4"/><path d="M1.8 3 V8.8" stroke="#e58a8a" stroke-width="0.5"/></svg></div>
<div class="wi" style="top:157.8px"><svg style="left:0;top:0" width="13" height="11" viewBox="0 0 13 11"><path d="M1.6 2.4 H7.6 M1.6 4 H6 M1.6 5.6 H7 M1.6 7.2 H5.6" stroke="#7a7a7a" stroke-width="0.5" stroke-dasharray="1.2 0.4"/><path d="M0.4 9.6 H12.4" stroke="#333" stroke-width="0.7" stroke-dasharray="1.4 0.8 6 0.8"/></svg></div>
<div class="wi" style="top:181px"><svg style="left:0;top:0" width="13" height="11" viewBox="0 0 13 11"><rect x="3.6" y="1.8" width="5.8" height="7.2" rx="0.6" fill="#c89a58" stroke="#8e6a34" stroke-width="0.4"/><rect x="4.5" y="3" width="4" height="5.2" fill="#f6f0e2"/><rect x="5.2" y="1.2" width="2.6" height="1.4" fill="#8a8a8a"/></svg></div>
</div>
<div id="status">
<span class="s" style="left:1.5px;top:3.6px">27.8636,33.2083</span>
<span class="s" style="left:1.5px;top:13.8px">@27.8636,33.2083</span>
<div style="left:126px;top:0;width:1px;height:23px;background:#8c8c8c"></div>
<span class="s" style="left:128px;top:3.6px">43.3494&lt;50°</span>
<span class="s" style="left:128px;top:13.8px">@43.3494&lt;50°</span>
<span class="s" style="left:299px;top:8.9px;font-size:5px;font-weight:bold;color:#2e2e2e;letter-spacing:-0.07px">Select entity or region</span>
<svg style="left:358.2px;top:3.2px" width="10" height="15.6" viewBox="0 0 10 15"><rect x="0.8" y="0.8" width="8.4" height="13" rx="4" fill="#fff" stroke="#666" stroke-width="0.7"/><path d="M0.8 6 H9.2 M5 0.8 V6" stroke="#888" stroke-width="0.5"/><rect x="4.2" y="1.6" width="1.6" height="3.2" rx="0.8" fill="#555"/></svg>
<span class="s" style="left:474.5px;top:8.9px;font-size:5px;font-weight:bold;color:#2e2e2e;letter-spacing:-0.07px">No entities selected.</span>
<div style="left:253.5px;top:10.5px;width:2px;height:2px;border-radius:1px;background:#bdbdbd"></div>
<div style="left:470.5px;top:10.5px;width:2px;height:2px;border-radius:1px;background:#bdbdbd"></div>
<div style="left:635.5px;top:10.5px;width:2px;height:2px;border-radius:1px;background:#bdbdbd"></div>
</div>
<div id="menu">
<div class="sep" style="top:24.8px"></div>
<div class="sep" style="top:40.8px"></div>
<div class="sep" style="top:116.8px"></div>
<div class="sep" style="top:132.8px"></div>
<div class="sep" style="top:168.8px"></div>
<div class="sep" style="top:184.8px"></div>
<div class="sep" style="top:200.8px"></div>
<div class="sep" style="top:226.8px"></div>
<div class="hl" style="left:-0.5px;top:241.1px;width:145.3px;height:9.7px"></div>
<span class="mi" style="top:5.3px;transform:scaleX(0.962)">Undo [Change document setting] (OO)</span>
<span class="mi dis" style="top:15.3px">Redo [-] (UU)</span>
<span class="mi dis" style="top:31.3px">Delete (ER)</span>
<span class="mi dis" style="top:47.3px">Cut</span>
<span class="mi dis" style="top:57.3px">Cut with Reference (RT)</span>
<span class="mi dis" style="top:67.3px">Copy (CP)</span>
<span class="mi dis" style="top:77.3px">Copy with Reference (RC)</span>
<span class="mi" style="top:87.3px">Paste (PS)</span>
<span class="mi" style="top:97.3px">Paste along Entity (PE)</span>
<span class="mi dis" style="top:107.3px">Duplicate (DP)</span>
<span class="mi" style="top:123.3px">Quick Modify</span>
<span class="mi" style="top:139.3px">Find/Replace (RP)</span>
<span class="mi" style="top:149.3px">Substitute Fonts (FF)</span>
<span class="mi" style="top:159.3px">Scale Text Heights (MG)</span>
<span class="mi" style="top:175.3px">Convert Drawing Unit (CU)</span>
<span class="mi" style="top:191.3px">Left Click</span>
<span class="mi" style="top:207.3px">Escape</span>
<span class="mi" style="top:217.3px">Reset / Idle (QQ)</span>
<span class="mi" style="top:233.3px">Drawing Preferences</span>
<span class="mi" style="top:243.3px">Application Preferences</span>
<svg style="left:9.5px;top:3.1000000000000014px" width="8" height="9" viewBox="0 0 8 9"><circle cx="4.7" cy="4.8" r="2.15" fill="none" stroke="#2fa43c" stroke-width="1.7"/><path d="M0.5 2.6 H2.6 V5.6 H0.5Z" fill="#2fa43c"/></svg>
<svg style="left:9.5px;top:13.100000000000001px" width="8" height="9" viewBox="0 0 8 9"><circle cx="3.2" cy="4.8" r="2.15" fill="none" stroke="#a5d8ab" stroke-width="1.5"/><path d="M5.2 3.2 H7.4 V6.2 H5.2Z" fill="#a5d8ab"/></svg>
<svg style="left:9.5px;top:29.200000000000003px" width="8" height="9" viewBox="0 0 8 9"><path d="M5.9 1.2 L7.3 2.5 L2.5 7.3 L1.1 6 Z" fill="#f1b9b9" stroke="#e9a0a0" stroke-width="0.3"/><path d="M2 5.9 L6.4 1.7" stroke="#f7e6e6" stroke-width="0.4"/><path d="M1 8 H5" stroke="#e2c8c8" stroke-width="0.5"/></svg>
<svg style="left:9.5px;top:45.3px" width="8" height="9" viewBox="0 0 8 9"><path d="M5 0.6 C4.8 2.6 4.4 4 3.6 5.4 M6.8 2.4 C5.6 3.6 4.4 4.2 3 4.6" stroke="#cfcfcf" stroke-width="0.9" fill="none"/><circle cx="1.9" cy="4.4" r="1.1" fill="none" stroke="#ea8d8d" stroke-width="0.9"/><circle cx="4" cy="7" r="1.1" fill="none" stroke="#ea8d8d" stroke-width="0.9"/></svg>
<svg style="left:9.5px;top:55.3px" width="8" height="9" viewBox="0 0 8 9"><path d="M5 0.6 C4.8 2.6 4.4 4 3.6 5.4 M6.8 2.4 C5.6 3.6 4.4 4.2 3 4.6" stroke="#cfcfcf" stroke-width="0.9" fill="none"/><circle cx="1.9" cy="4.4" r="1.1" fill="none" stroke="#ea8d8d" stroke-width="0.9"/><circle cx="4" cy="7" r="1.1" fill="none" stroke="#ea8d8d" stroke-width="0.9"/><path d="M0.4 7.6 H2.4 M1.4 6.6 V8.6" stroke="#bdbdbd" stroke-width="0.5"/></svg>
<svg style="left:9.5px;top:65.1px" width="8" height="9" viewBox="0 0 8 9"><rect x="1" y="0.8" width="4.6" height="5.4" fill="#efefef" stroke="#d6d6d6" stroke-width="0.5"/><rect x="2.6" y="2.4" width="4.6" height="5.4" fill="#f3f3f3" stroke="#d3d3d3" stroke-width="0.5"/></svg>
<svg style="left:9.5px;top:75.1px" width="8" height="9" viewBox="0 0 8 9"><rect x="1" y="0.8" width="4.6" height="5.4" fill="#efefef" stroke="#d6d6d6" stroke-width="0.5"/><rect x="2.6" y="2.4" width="4.6" height="5.4" fill="#f3f3f3" stroke="#d3d3d3" stroke-width="0.5"/><path d="M0.2 7.4 H2 M1.1 6.5 V8.3" stroke="#c4c4c4" stroke-width="0.5"/></svg>
<svg style="left:9.5px;top:85.0px" width="8" height="9" viewBox="0 0 8 9"><rect x="0.7" y="1.2" width="6.8" height="7.2" rx="0.5" fill="#c1904e" stroke="#8a6330" stroke-width="0.5"/><rect x="1.8" y="2.4" width="4.6" height="5.2" fill="#f8f8f8"/><rect x="2.6" y="0.4" width="3" height="1.6" rx="0.4" fill="#9a9a9a" stroke="#6e6e6e" stroke-width="0.3"/><path d="M2.6 4 H5.6 M2.6 5.2 H5.6 M2.6 6.4 H4.8" stroke="#cfcfcf" stroke-width="0.4"/></svg>
<svg style="left:9.5px;top:94.8px" width="8" height="9" viewBox="0 0 8 9"><rect x="1.4" y="1" width="5.4" height="5.8" rx="0.5" fill="#c1904e" stroke="#8a6330" stroke-width="0.5"/><rect x="2.4" y="2" width="3.4" height="4" fill="#f8f8f8"/><rect x="2.9" y="0.3" width="2.4" height="1.3" rx="0.3" fill="#9a9a9a"/><path d="M1.6 7.9 H6.6" stroke="#ef9a9a" stroke-width="0.8" stroke-dasharray="1.2 0.6"/></svg>
<svg style="left:9.5px;top:105.1px" width="8" height="9" viewBox="0 0 8 9"><rect x="1.6" y="1" width="5.6" height="6" fill="#f1f1f1" stroke="#dadada" stroke-width="0.5"/><path d="M0.8 7.6 C2 6.4 3.2 6.6 4 7.6" stroke="#9fdca4" stroke-width="1" fill="none"/></svg>
<svg style="left:10px;top:136.9px" width="9" height="9" viewBox="0 0 9 9"><text x="0" y="4.6" style="font-family:'Liberation Sans',sans-serif;fill:#222;font-size:5.6px">A</text><text x="4.2" y="8.8" style="font-family:'Liberation Sans',sans-serif;fill:#222;font-size:5px;font-weight:bold">B</text><path d="M4.4 1.6 H6.6 V3.2" stroke="#333" stroke-width="0.5" fill="none"/></svg>
<svg style="left:10px;top:146.9px" width="9" height="9" viewBox="0 0 9 9"><text x="0" y="4.6" style="font-family:'Liberation Sans',sans-serif;fill:#222;font-size:5.6px">A</text><text x="4.6" y="8.8" style="font-family:'Liberation Sans',sans-serif;fill:#222;font-size:5px;font-style:italic;font-family:'Liberation Serif',serif">A</text><path d="M4.4 1.6 H6.6 V3.2" stroke="#333" stroke-width="0.5" fill="none"/></svg>
<svg style="left:10px;top:157.1px" width="9" height="9" viewBox="0 0 9 9"><text x="0" y="7.4" style="font-family:'Liberation Sans',sans-serif;fill:#222;font-size:7.4px">A</text><path d="M5.8 3 V3.8 M5.8 6 V6.8" stroke="#222" stroke-width="0.9"/></svg>
<svg style="left:9.5px;top:173.1px" width="8" height="9" viewBox="0 0 8 9"><path d="M1.4 0.8 V7.2 H6.8" stroke="#b9b9b9" stroke-width="0.9" fill="none"/><path d="M3 2 V6 M4.4 3 V6 M5.8 1.6 V6" stroke="#d2d2d2" stroke-width="0.6"/></svg>
<svg style="left:12.5px;top:215.8px" width="6" height="8" viewBox="0 0 6 8"><path d="M0.8 0.6 V5.6 L2 4.6 L2.9 6.6 L3.6 6.3 L2.8 4.3 L4.2 4.2Z" fill="#f4f4f4" stroke="#bdbdbd" stroke-width="0.5"/></svg>
<svg style="left:10px;top:231.9px" width="8" height="8" viewBox="0 0 8 8"><rect x="0.5" y="0.5" width="6.4" height="6.6" fill="#fbfbfb" stroke="#b4b4b4" stroke-width="0.5"/><path d="M1.6 6 L5.4 2" stroke="#3f63c8" stroke-width="0.9"/><path d="M2 2 L3.4 3.4" stroke="#c0392b" stroke-width="0.8"/><path d="M4.4 4.6 L5.8 6" stroke="#777" stroke-width="0.7"/></svg>
<svg style="left:10px;top:241.8px" width="8" height="8" viewBox="0 0 8 8"><path d="M1 6.8 L6 1.6" stroke="#2a3a9a" stroke-width="1.2" stroke-linecap="round"/><path d="M1.4 1.6 C2.6 0.8 3.8 1.6 3.4 2.8 L6.8 6.2 L6 7 L2.6 3.6 C1.6 4 0.8 3 1.4 1.6Z" fill="#222"/></svg>
<svg style="left:134.5px;top:122.8px" width="4" height="5" viewBox="0 0 4 5"><path d="M0 0 L4 2.5 L0 5Z" fill="#222"/></svg>
<svg style="left:0.9px;top:216.6px" width="6.6" height="6.6" viewBox="0 0 7 7"><path d="M0.8 3.8 L2.6 6 L6.2 0.8" fill="none" stroke="#222" stroke-width="0.8"/></svg>
</div>
<div class="rl1" style="left:16.6px;top:-1.5px;width:25.6px;height:1px"></div>
<div class="rl1" style="left:16.6px;top:9.8px;width:25.6px;height:1px"></div>
<div class="rl1" style="left:20.1px;top:-5px;width:1px;height:19.3px"></div>
<div class="rl1" style="left:37.7px;top:-5px;width:1px;height:19.3px"></div>
<div class="rl1" style="left:16.5px;top:251.6px;width:153.3px;height:1px"></div>
<div class="rl1" style="left:16.5px;top:261.3px;width:153.3px;height:1px"></div>
<div class="rl1" style="left:20.0px;top:248.1px;width:1px;height:17.700000000000017px"></div>
<div class="rl1" style="left:165.3px;top:248.1px;width:1px;height:17.700000000000017px"></div>
</div></body></html>
